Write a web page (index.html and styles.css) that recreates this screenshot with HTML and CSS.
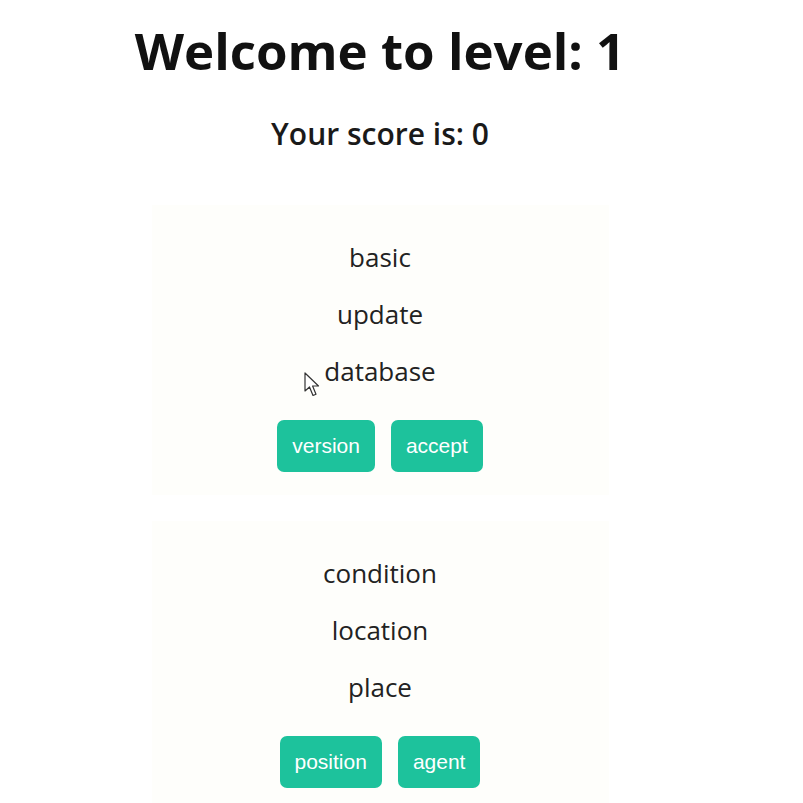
FILE: index.html
```html
<!DOCTYPE html>
<html>
<head>
<meta charset="utf-8">
<link rel="stylesheet" href="styles.css">
</head>
<body>
<div class="page">
  <h1 class="title">Welcome to level: 1</h1>
  <h2 class="score">Your score is: 0</h2>
  <div class="card">
    <div class="word">basic</div>
    <div class="word">update</div>
    <div class="word">database</div>
    <div class="actions">
      <button class="btn">version</button>
      <button class="btn">accept</button>
    </div>
  </div>
  <div class="card">
    <div class="word">condition</div>
    <div class="word">location</div>
    <div class="word">place</div>
    <div class="actions">
      <button class="btn">position</button>
      <button class="btn">agent</button>
    </div>
  </div>
</div>
<svg class="cursor" width="18" height="26" viewBox="0 0 18 26"><path d="M1 1 L1 19 L5.5 15 L9 23.5 L12 22.2 L8.6 14 L14.5 14 Z" fill="#fff" stroke="#333" stroke-width="1.2" stroke-linejoin="round"/></svg>
</body>
</html>
```
FILE: styles.css
```css
html, body {
  margin: 0;
  padding: 0;
  background: #ffffff;
}
body {
  font-family: "Open Sans", "DejaVu Sans", sans-serif;
  color: #1a1a1a;
  position: relative;
  min-height: 803px;
}
.page {
  width: 760px;
  display: flex;
  flex-direction: column;
  align-items: center;
  padding-top: 19px;
}
.title {
  margin: 0;
  font-size: 51px;
  line-height: 62px;
  font-weight: 700;
  color: #111;
}
.score {
  margin: 35px 0 0;
  font-size: 30px;
  line-height: 36px;
  font-weight: 600;
  color: #1a1a1a;
}
.card {
  margin-top: 53px;
  width: 457px;
  background: #fefefb;
  padding: 24px 0 23px;
  display: flex;
  flex-direction: column;
  align-items: center;
}
.card + .card {
  margin-top: 26px;
}
.word {
  font-size: 26px;
  line-height: 57px;
  color: #222;
}
.actions {
  margin-top: 20px;
  display: flex;
  gap: 16px;
}
.btn {
  font-family: "Liberation Sans", Arial, sans-serif;
  font-size: 21px;
  color: #fff;
  background: #1dc29c;
  border: none;
  border-radius: 7px;
  height: 52px;
  padding: 0 15px;
}
.cursor {
  position: absolute;
  left: 304px;
  top: 372px;
}
```
